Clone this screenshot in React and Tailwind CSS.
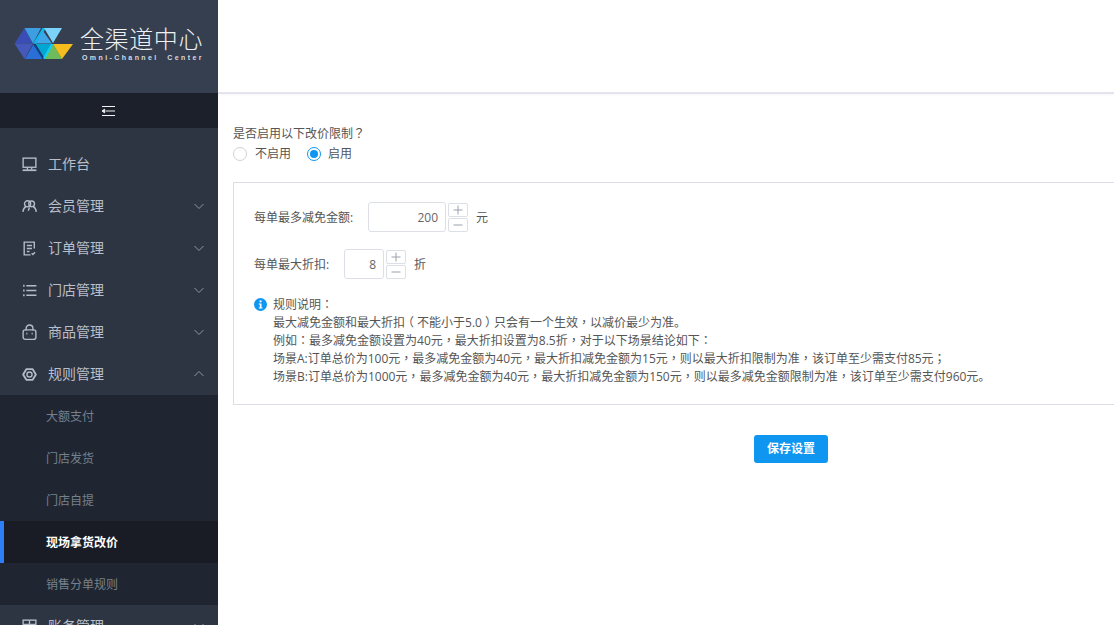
import React from "react";

function Chevron({ up }) {
  return (
    <svg width="12" height="12" viewBox="0 0 12 12" fill="none" stroke="#8d95a3" strokeWidth="1" className="shrink-0">
      <path d={up ? "M1.5 8 L6 3.5 L10.5 8" : "M1.5 4 L6 8.5 L10.5 4"} />
    </svg>
  );
}

function T({ children }) {
  const parts = children.split(/([，：；？（）])/);
  return (
    <>
      {parts.map((p, i) => {
        if (p === "（" || p === "）") return <span key={i} className="inline-block w-[12px] text-center leading-none [font-feature-settings:'halt']">{p}</span>;
        if (/^[，：；？]$/.test(p)) return <span key={i} className="leading-none [font-family:'Noto_Sans_CJK_TC',sans-serif]">{p}</span>;
        return p;
      })}
    </>
  );
}

const ic = { width: 17, height: 17, viewBox: "0 0 16 16", fill: "none", stroke: "#b5bcc8", strokeWidth: 1.3, className: "shrink-0" };

const icons = {
  desk: (
    <svg {...ic}>
      <rect x="2" y="2" width="12" height="8.6" />
      <path d="M6 11v2M10 11v2" />
      <path d="M1.5 13.4h13" strokeWidth="1.6" />
    </svg>
  ),
  user: (
    <svg {...ic}>
      <circle cx="6.2" cy="5.5" r="2.9" />
      <circle cx="10" cy="5.5" r="2.7" />
      <path d="M1.8 13c.3-2.6 1.6-4.4 3-5M14.4 13c-.3-2.6-1.6-4.4-3-5M8 9l-1.2 3" />
    </svg>
  ),
  order: (
    <svg {...ic}>
      <path d="M12.5 8V2H3v12h6" />
      <path d="M5.5 5.2h4.8M5.5 8h4.8M5.5 10.8h2.5M10 12.5l1.2 1.2 2-2.2" />
    </svg>
  ),
  list: (
    <svg {...ic}>
      <path d="M5 3.5h9.5M5 8h9.5M5 12.5h9.5" />
      <path d="M2 3.5h1.4M2 8h1.4M2 12.5h1.4" strokeWidth="1.8" />
    </svg>
  ),
  bag: (
    <svg {...ic}>
      <rect x="2" y="5.5" width="12" height="9" rx="2" />
      <path d="M4.8 6V4.2a3.2 3.2 0 0 1 6.4 0V6" />
      <path d="M5 9h1M10 9h1" strokeWidth="1.6" />
    </svg>
  ),
  rule: (
    <svg {...ic}>
      <path d="M5 3h6l3 5-3 5H5L2 8z" strokeLinejoin="round" strokeWidth="1.7" />
      <circle cx="8" cy="8" r="2.4" />
    </svg>
  ),
  bill: (
    <svg {...ic}>
      <rect x="2" y="2" width="12" height="12" />
      <path d="M2 6h12M8 2v8" />
    </svg>
  ),
};

function MenuItem({ icon, label, chevron, up }) {
  return (
    <div className="h-[42px] shrink-0 flex items-center pl-[22px] pr-[13px]">
      <span className="w-[14px] h-[14px] flex items-center justify-center shrink-0">{icons[icon]}</span>
      <span className="ml-[12px] text-[14px] text-[#b9bfca] flex-1 leading-none">{label}</span>
      {chevron && <Chevron up={up} />}
    </div>
  );
}

function SubItem({ label, active }) {
  return (
    <div
      className={
        "h-[42px] shrink-0 flex items-center pl-[46px] pt-[2px] text-[12px] relative " +
        (active ? "bg-[#191c25] text-white font-bold" : "text-[#77808d]")
      }
    >
      {active && <span className="absolute left-0 top-0 bottom-0 w-[4px] bg-[#2d7ef7]" />}
      {label}
    </div>
  );
}

function Logo() {
  return (
    <div className="h-[93px] shrink-0 bg-[#353f4f] flex items-start pt-[27px] pl-[14px]">
      <svg width="60" height="33" viewBox="14 27 60 33" className="shrink-0">
        <polygon points="14.5,43.5 24.5,28 33,43.5" fill="#3a4db4" />
        <polygon points="14.5,43.5 33,43.5 24.5,59" fill="#4459b9" />
        <polygon points="24.5,28 41,28 33,43.5" fill="#3d9fe2" />
        <polygon points="33.5,44 43,59 25,59" fill="#2a6ed8" />
        <polygon points="33,43.5 42.5,28 46,28 36,44" fill="#0fb6ee" />
        <polygon points="36,43.5 43,31 52,43.5" fill="#3fa6ea" />
        <polygon points="44,28 62,28 53,43" fill="#7bd3f9" />
        <polygon points="35.5,44 52,44 44,58" fill="#03a5d2" />
        <polygon points="33,44 35.5,44 45,59 42.5,59" fill="#123e7e" />
        <polygon points="53,44 62,59 44,59" fill="#6dbb5b" />
        <polygon points="53,44 73,44 62,59" fill="#f5be1e" />
        <polygon points="51,44 53.5,44 45,59 43,58" fill="#13d0f2" />
      </svg>
      <div className="ml-[6px] flex flex-col items-start">
        <div className="text-[24px] leading-[24px] font-light text-[#eef0f3] tracking-[0.6px] whitespace-nowrap h-[25px]">全渠道中心</div>
        <div className="mt-[2px] ml-[2px] text-[7px] leading-[8px] font-bold text-[#d8dce2] tracking-[2.4px] whitespace-pre [font-family:'Liberation_Sans',sans-serif]">Omni-Channel  Center</div>
      </div>
    </div>
  );
}

function Stepper() {
  return (
    <div className="ml-[2px] flex flex-col gap-[1px] shrink-0">
      <div className="w-[20px] h-[14px] border border-[#dcdfe6] rounded-[2px] flex items-center justify-center">
        <svg width="10" height="10" viewBox="0 0 10 10" stroke="#9aa1ac" strokeWidth="1"><path d="M5 .5v9M.5 5h9" /></svg>
      </div>
      <div className="w-[20px] h-[14px] border border-[#dcdfe6] rounded-[2px] flex items-center justify-center">
        <svg width="10" height="10" viewBox="0 0 10 10" stroke="#9aa1ac" strokeWidth="1"><path d="M.5 5h9" /></svg>
      </div>
    </div>
  );
}

function NumberRow({ label, labelW, inputW, value, unit, className }) {
  return (
    <div className={"flex items-center h-[30px] pl-[20px] " + (className || "")}>
      <span className="pt-[2px] text-[12px] text-[#555] whitespace-nowrap" style={{ width: labelW }}>{label}</span>
      <div className="h-[30px] border border-[#dcdfe6] rounded-[3px] flex items-center justify-end pr-[7px] pt-[2px] text-[12px] text-[#666]" style={{ width: inputW }}>
        {value}
      </div>
      <Stepper />
      <span className="ml-[8px] pt-[2px] text-[12px] text-[#555]">{unit}</span>
    </div>
  );
}

export default function App() {
  return (
    <div className="w-[1114px] h-[625px] overflow-hidden flex bg-white [font-family:'Open_Sans','Noto_Sans_CJK_SC',sans-serif]">
      <aside className="w-[218px] h-full shrink-0 flex flex-col overflow-hidden bg-[#2e3542]">
        <Logo />
        <div className="h-[35px] shrink-0 bg-[#1c202b] flex items-center justify-center pr-[2px]">
          <svg width="15" height="12" viewBox="0 0 15 12" fill="none" stroke="#f1f2f4" strokeWidth="1">
            <path d="M1 1.5h13M4.5 6h9.5M1 10.5h13" />
            <path d="M3.6 4.2 1 6l2.6 1.8z" fill="#f1f2f4" />
          </svg>
        </div>
        <div className="h-[15px] shrink-0" />
        <MenuItem icon="desk" label="工作台" />
        <MenuItem icon="user" label="会员管理" chevron />
        <MenuItem icon="order" label="订单管理" chevron />
        <MenuItem icon="list" label="门店管理" chevron />
        <MenuItem icon="bag" label="商品管理" chevron />
        <MenuItem icon="rule" label="规则管理" chevron up />
        <div className="bg-[#1f2631] flex flex-col shrink-0">
          <SubItem label="大额支付" />
          <SubItem label="门店发货" />
          <SubItem label="门店自提" />
          <SubItem label="现场拿货改价" active />
          <SubItem label="销售分单规则" />
        </div>
        <MenuItem icon="bill" label="账务管理" chevron />
      </aside>

      <main className="flex-1 min-w-0 flex flex-col">
        <header className="h-[94px] shrink-0 bg-white border-b-2 border-[#e4e4ee] shadow-[0_1px_3px_rgba(0,0,0,0.04)]" />
        <div className="pl-[15px] pt-[30px] text-[12px] text-[#555] leading-[18px]">
          <div className="h-[18px] mt-[1px]"><T>是否启用以下改价限制？</T></div>
          <div className="mt-[2px] h-[18px] flex items-center">
            <span className="w-[14px] h-[14px] rounded-full border border-[#cfd2d8] bg-white shrink-0" />
            <span className="ml-[8px]">不启用</span>
            <span className="ml-[16px] w-[14px] h-[14px] rounded-full border border-[#0e96f0] bg-white flex items-center justify-center shrink-0">
              <span className="w-[8px] h-[8px] rounded-full bg-[#0e96f0]" />
            </span>
            <span className="ml-[7px]">启用</span>
          </div>

          <section className="mt-[19px] w-[900px] h-[223px] border border-[#dcdde5] pt-[19px]">
            <NumberRow label="每单最多减免金额:" labelW={114} inputW={78} value="200" unit="元" />
            <NumberRow label="每单最大折扣:" labelW={90} inputW={40} value="8" unit="折" className="mt-[17px]" />
            <div className="mt-[17px] pl-[20px] flex items-start">
              <svg width="13" height="13" viewBox="0 0 13 13" className="mt-[2px] shrink-0">
                <circle cx="6.5" cy="6.5" r="6.5" fill="#0e96f0" />
                <rect x="5.6" y="2.4" width="1.9" height="1.9" fill="#fff" />
                <path d="M4.8 5.5h2.7v4h1v1H4.8v-1h1v-3h-1z" fill="#fff" />
              </svg>
              <div className="ml-[6px] whitespace-nowrap text-[#555]">
                <div className="h-[18px]"><T>规则说明：</T></div>
                <div className="h-[18px]"><T>最大减免金额和最大折扣（不能小于5.0）只会有一个生效，以减价最少为准。</T></div>
                <div className="h-[18px]"><T>例如：最多减免金额设置为40元，最大折扣设置为8.5折，对于以下场景结论如下：</T></div>
                <div className="h-[18px]"><T>场景A:订单总价为100元，最多减免金额为40元，最大折扣减免金额为15元，则以最大折扣限制为准，该订单至少需支付85元；</T></div>
                <div className="h-[18px]"><T>场景B:订单总价为1000元，最多减免金额为40元，最大折扣减免金额为150元，则以最多减免金额限制为准，该订单至少需支付960元。</T></div>
              </div>
            </div>
          </section>

          <div className="mt-[30px] pl-[521px]">
            <button className="w-[74px] h-[28px] rounded-[3px] bg-[#0e96f0] text-white text-[12px] font-bold flex items-center justify-center">保存设置</button>
          </div>
        </div>
      </main>
    </div>
  );
}
